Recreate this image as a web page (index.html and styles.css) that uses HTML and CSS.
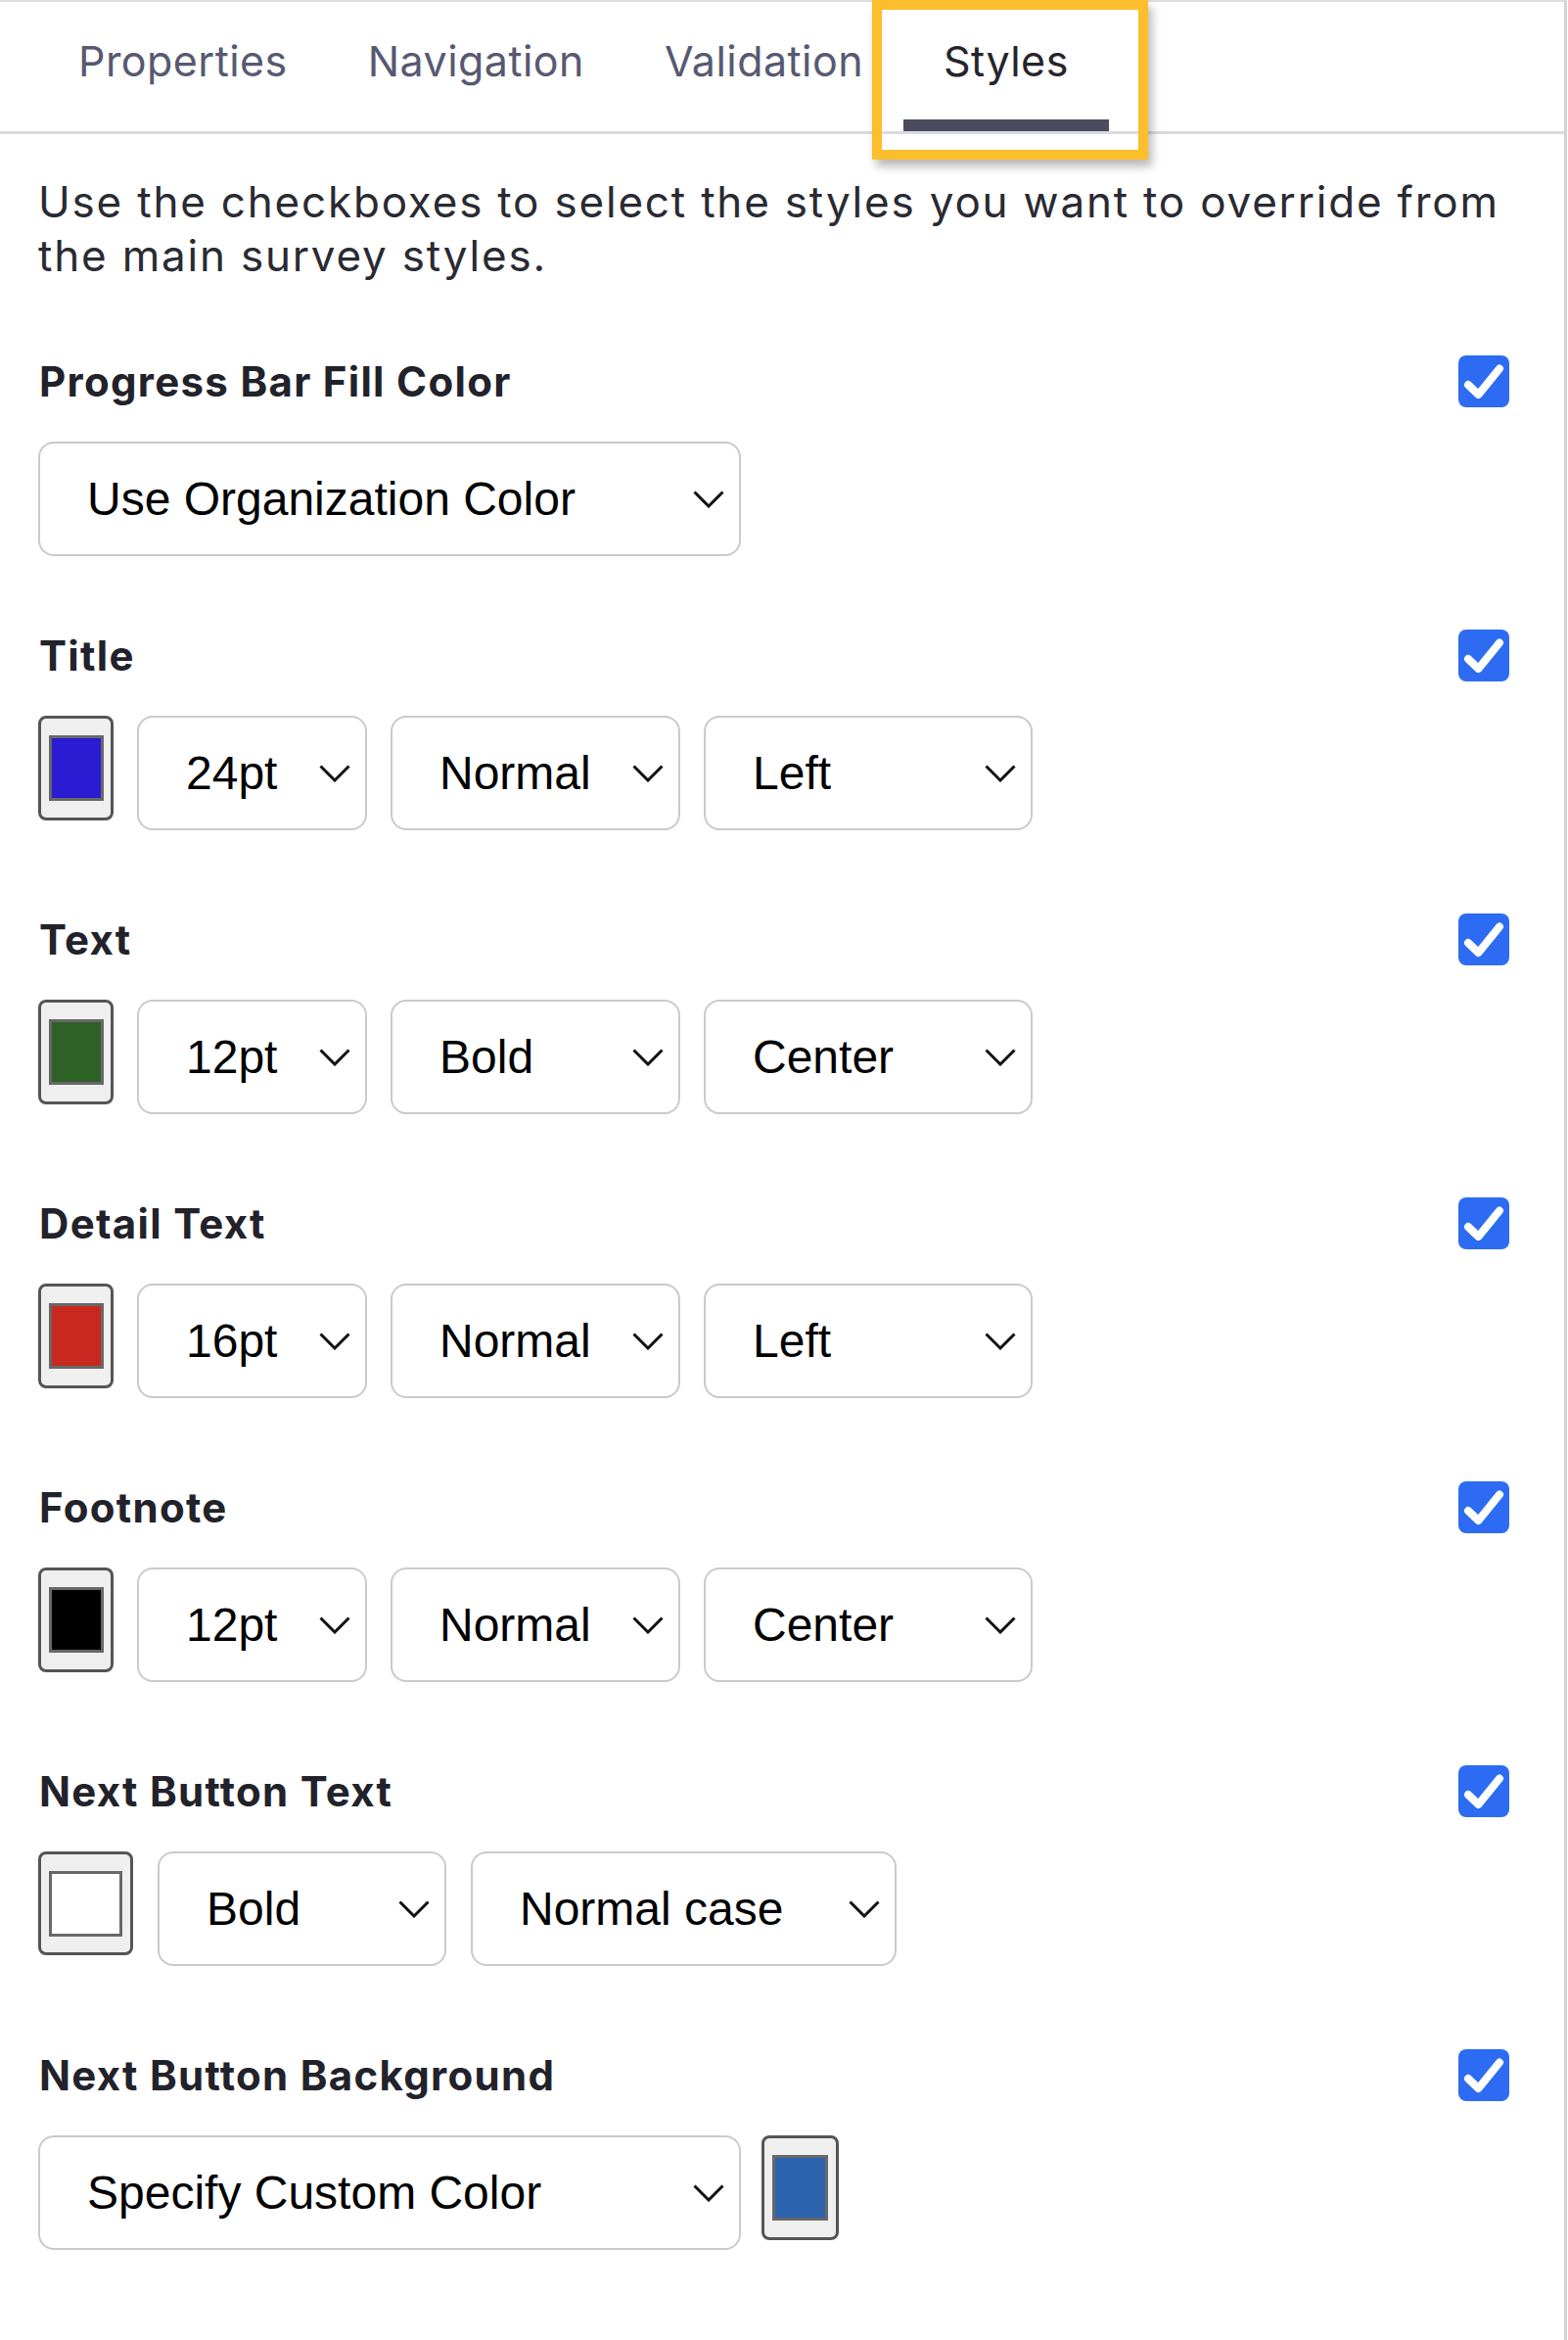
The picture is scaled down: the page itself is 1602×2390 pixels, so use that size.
FILE: index.html
```html
<!DOCTYPE html>
<html lang="en">
<head>
<meta charset="utf-8">
<title>Styles</title>
<link rel="stylesheet" href="styles.css">
</head>
<body>
<div class="panel">
  <div class="tabs">
    <div class="tab">Properties</div>
    <div class="tab">Navigation</div>
    <div class="tab">Validation</div>
    <div class="tab active">Styles<span class="highlight"></span></div>
  </div>
  <div class="content">
    <p class="intro">Use the checkboxes to select the styles you want to override from the main survey styles.</p>

    <div class="section first">
      <div class="head"><span class="label">Progress Bar Fill Color</span><span class="check"><svg viewBox="0 0 52 53" width="52" height="53"><rect width="52" height="53" rx="8" fill="#2d6cf2"/><polyline points="10,30 20.5,40 42,13.5" fill="none" stroke="#fff" stroke-width="8" stroke-linecap="round" stroke-linejoin="round"/></svg></span></div>
      <div class="controls">
        <div class="select w-wide"><span>Use Organization Color</span><svg class="chev" viewBox="0 0 32 18" width="32" height="18"><polyline points="1.5,1.5 16,16 30.5,1.5" fill="none" stroke="#111" stroke-width="3"/></svg></div>
      </div>
    </div>

    <div class="section">
      <div class="head"><span class="label">Title</span><span class="check"><svg viewBox="0 0 52 53" width="52" height="53"><rect width="52" height="53" rx="8" fill="#2d6cf2"/><polyline points="10,30 20.5,40 42,13.5" fill="none" stroke="#fff" stroke-width="8" stroke-linecap="round" stroke-linejoin="round"/></svg></span></div>
      <div class="controls">
        <div class="swatch"><span class="chip c-blue"></span></div>
        <div class="select w-size"><span>24pt</span><svg class="chev" viewBox="0 0 32 18" width="32" height="18"><polyline points="1.5,1.5 16,16 30.5,1.5" fill="none" stroke="#111" stroke-width="3"/></svg></div>
        <div class="select w-weight"><span>Normal</span><svg class="chev" viewBox="0 0 32 18" width="32" height="18"><polyline points="1.5,1.5 16,16 30.5,1.5" fill="none" stroke="#111" stroke-width="3"/></svg></div>
        <div class="select w-align"><span>Left</span><svg class="chev" viewBox="0 0 32 18" width="32" height="18"><polyline points="1.5,1.5 16,16 30.5,1.5" fill="none" stroke="#111" stroke-width="3"/></svg></div>
      </div>
    </div>

    <div class="section">
      <div class="head"><span class="label">Text</span><span class="check"><svg viewBox="0 0 52 53" width="52" height="53"><rect width="52" height="53" rx="8" fill="#2d6cf2"/><polyline points="10,30 20.5,40 42,13.5" fill="none" stroke="#fff" stroke-width="8" stroke-linecap="round" stroke-linejoin="round"/></svg></span></div>
      <div class="controls">
        <div class="swatch"><span class="chip c-green"></span></div>
        <div class="select w-size"><span>12pt</span><svg class="chev" viewBox="0 0 32 18" width="32" height="18"><polyline points="1.5,1.5 16,16 30.5,1.5" fill="none" stroke="#111" stroke-width="3"/></svg></div>
        <div class="select w-weight"><span>Bold</span><svg class="chev" viewBox="0 0 32 18" width="32" height="18"><polyline points="1.5,1.5 16,16 30.5,1.5" fill="none" stroke="#111" stroke-width="3"/></svg></div>
        <div class="select w-align"><span>Center</span><svg class="chev" viewBox="0 0 32 18" width="32" height="18"><polyline points="1.5,1.5 16,16 30.5,1.5" fill="none" stroke="#111" stroke-width="3"/></svg></div>
      </div>
    </div>

    <div class="section">
      <div class="head"><span class="label">Detail Text</span><span class="check"><svg viewBox="0 0 52 53" width="52" height="53"><rect width="52" height="53" rx="8" fill="#2d6cf2"/><polyline points="10,30 20.5,40 42,13.5" fill="none" stroke="#fff" stroke-width="8" stroke-linecap="round" stroke-linejoin="round"/></svg></span></div>
      <div class="controls">
        <div class="swatch"><span class="chip c-red"></span></div>
        <div class="select w-size"><span>16pt</span><svg class="chev" viewBox="0 0 32 18" width="32" height="18"><polyline points="1.5,1.5 16,16 30.5,1.5" fill="none" stroke="#111" stroke-width="3"/></svg></div>
        <div class="select w-weight"><span>Normal</span><svg class="chev" viewBox="0 0 32 18" width="32" height="18"><polyline points="1.5,1.5 16,16 30.5,1.5" fill="none" stroke="#111" stroke-width="3"/></svg></div>
        <div class="select w-align"><span>Left</span><svg class="chev" viewBox="0 0 32 18" width="32" height="18"><polyline points="1.5,1.5 16,16 30.5,1.5" fill="none" stroke="#111" stroke-width="3"/></svg></div>
      </div>
    </div>

    <div class="section">
      <div class="head"><span class="label">Footnote</span><span class="check"><svg viewBox="0 0 52 53" width="52" height="53"><rect width="52" height="53" rx="8" fill="#2d6cf2"/><polyline points="10,30 20.5,40 42,13.5" fill="none" stroke="#fff" stroke-width="8" stroke-linecap="round" stroke-linejoin="round"/></svg></span></div>
      <div class="controls">
        <div class="swatch"><span class="chip c-black"></span></div>
        <div class="select w-size"><span>12pt</span><svg class="chev" viewBox="0 0 32 18" width="32" height="18"><polyline points="1.5,1.5 16,16 30.5,1.5" fill="none" stroke="#111" stroke-width="3"/></svg></div>
        <div class="select w-weight"><span>Normal</span><svg class="chev" viewBox="0 0 32 18" width="32" height="18"><polyline points="1.5,1.5 16,16 30.5,1.5" fill="none" stroke="#111" stroke-width="3"/></svg></div>
        <div class="select w-align"><span>Center</span><svg class="chev" viewBox="0 0 32 18" width="32" height="18"><polyline points="1.5,1.5 16,16 30.5,1.5" fill="none" stroke="#111" stroke-width="3"/></svg></div>
      </div>
    </div>

    <div class="section">
      <div class="head"><span class="label">Next Button Text</span><span class="check"><svg viewBox="0 0 52 53" width="52" height="53"><rect width="52" height="53" rx="8" fill="#2d6cf2"/><polyline points="10,30 20.5,40 42,13.5" fill="none" stroke="#fff" stroke-width="8" stroke-linecap="round" stroke-linejoin="round"/></svg></span></div>
      <div class="controls gap-wide">
        <div class="swatch wide"><span class="chip c-white"></span></div>
        <div class="select w-btnweight"><span>Bold</span><svg class="chev" viewBox="0 0 32 18" width="32" height="18"><polyline points="1.5,1.5 16,16 30.5,1.5" fill="none" stroke="#111" stroke-width="3"/></svg></div>
        <div class="select w-case"><span>Normal case</span><svg class="chev" viewBox="0 0 32 18" width="32" height="18"><polyline points="1.5,1.5 16,16 30.5,1.5" fill="none" stroke="#111" stroke-width="3"/></svg></div>
      </div>
    </div>

    <div class="section">
      <div class="head"><span class="label">Next Button Background</span><span class="check"><svg viewBox="0 0 52 53" width="52" height="53"><rect width="52" height="53" rx="8" fill="#2d6cf2"/><polyline points="10,30 20.5,40 42,13.5" fill="none" stroke="#fff" stroke-width="8" stroke-linecap="round" stroke-linejoin="round"/></svg></span></div>
      <div class="controls gap-narrow">
        <div class="select w-wide"><span>Specify Custom Color</span><svg class="chev" viewBox="0 0 32 18" width="32" height="18"><polyline points="1.5,1.5 16,16 30.5,1.5" fill="none" stroke="#111" stroke-width="3"/></svg></div>
        <div class="swatch bg"><span class="chip c-navy"></span></div>
      </div>
    </div>
  </div>
</div>
</body>
</html>
```

FILE: styles.css
```css
* { box-sizing: border-box; }

html, body {
  margin: 0;
  padding: 0;
  background: #ffffff;
}

body {
  font-family: Inter, "Noto Sans", "DejaVu Sans", sans-serif;
  color: #26262e;
}

.panel {
  width: 1601px;
  min-height: 2390px;
  border-top: 2px solid #dcdce1;
  border-right: 3px solid #d2d2d6;
  background: #ffffff;
}

.tabs {
  display: flex;
  height: 135px;
  padding-left: 39px;
  border-bottom: 3px solid #dadae0;
}

.tab {
  position: relative;
  display: flex;
  flex-direction: column;
  height: 132px;
  padding: 34px 41px 0;
  font-size: 43px;
  line-height: 52px;
  color: #575971;
  letter-spacing: 0.45px;
}

.tab.active {
  color: #25252c;
}

.tab.active::after {
  content: "";
  display: block;
  margin-top: auto;
  height: 12px;
  margin-left: -41px;
  margin-right: -41px;
  background: #4a4b5c;
}

.highlight {
  position: absolute;
  left: -32px;
  top: -2px;
  width: 282px;
  height: 163px;
  border: 10px solid #fcbe2c;
  box-shadow: 4px 7px 9px rgba(0, 0, 0, 0.28);
  pointer-events: none;
}

.content {
  padding: 0 56px 0 39px;
}

.intro {
  margin: 42px 0 0;
  font-size: 44px;
  line-height: 55px;
  color: #2a2a33;
  letter-spacing: 1.8px;
}

.section {
  margin-top: 85px;
}

.section.first {
  margin-top: 74px;
}

.section.first + .section {
  margin-top: 75px;
}

.head {
  display: flex;
  align-items: center;
  justify-content: space-between;
  height: 53px;
}

.label {
  font-size: 42px;
  font-weight: 700;
  color: #22222a;
  letter-spacing: 1.3px;
  padding-left: 1px;
}

.check {
  display: block;
  width: 52px;
  height: 53px;
}

.check svg {
  display: block;
}

.controls {
  display: flex;
  align-items: flex-start;
  gap: 24px;
  margin-top: 35px;
}

.controls.gap-wide {
  gap: 25px;
}

.controls.gap-narrow {
  gap: 21px;
}

.select {
  display: flex;
  align-items: center;
  height: 117px;
  padding: 0 15px 0 48px;
  border: 2.5px solid #cacaca;
  border-radius: 16px;
  background: #ffffff;
  font-family: "Liberation Sans", Arial, sans-serif;
  font-size: 48px;
  color: #000000;
}

.select span {
  white-space: nowrap;
}

.select .chev {
  display: block;
  margin-left: auto;
  flex: none;
}

.w-wide { width: 718px; }
.w-size { width: 235px; }
.w-weight { width: 296px; }
.w-align { width: 336px; }
.w-btnweight { width: 295px; }
.w-case { width: 435px; }

.swatch {
  display: flex;
  align-items: center;
  justify-content: center;
  width: 77px;
  height: 107px;
  border: 3px solid #555555;
  border-radius: 8px;
  background: #efefef;
  flex: none;
}

.swatch.wide {
  width: 97px;
  height: 106px;
}

.swatch.bg {
  width: 79px;
}

.chip {
  display: block;
  width: 56px;
  height: 67px;
  border: 3px solid #686868;
}

.swatch.wide .chip {
  width: 75px;
}

.swatch.bg .chip {
  width: 57px;
}

.c-blue { background: #2b1bd2; }
.c-green { background: #2d6125; }
.c-red { background: #c8281f; }
.c-black { background: #000000; }
.c-white { background: #ffffff; }
.c-navy { background: #2d62ae; }
```
